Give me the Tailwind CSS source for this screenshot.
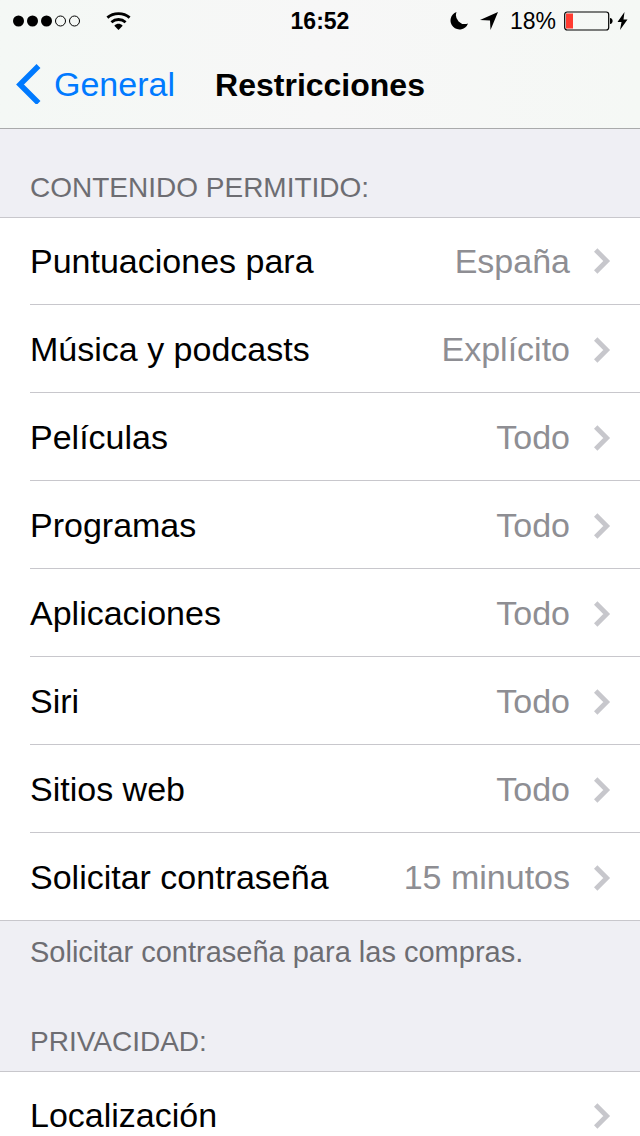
<!DOCTYPE html>
<html lang="es">
<head>
<meta charset="utf-8">
<meta name="viewport" content="width=device-width, initial-scale=1">
<title>Restricciones</title>
<script src="https://cdn.jsdelivr.net/npm/@tailwindcss/browser@4"></script>
</head>
<body class="flex h-screen flex-col overflow-hidden bg-[#efeff4] font-['Liberation_Sans',Arial,sans-serif] text-black">
<svg class="hidden" aria-hidden="true">
  <symbol id="chevron" viewBox="0 0 17 26"><path d="M1.700 2 12.700 13 1.700 24" fill="none" stroke="#c7c7cc" stroke-width="4.800"/></symbol>
</svg>

<header class="shrink-0 border-b border-[#a9aaab] bg-linear-to-r from-[#f4f8f5] via-[#f7f7f7] to-[#f5f8f5]">
  <div class="grid h-10 grid-cols-[1fr_auto_1fr] items-center px-3 pt-px text-[23px] leading-10">
    <div class="flex items-center gap-6">
      <svg class="h-3 w-[70px]" viewBox="0 0 70 12" role="img" aria-label="Cobertura">
        <circle cx="6.5" cy="6" r="5.500"/><circle cx="20.5" cy="6" r="5.500"/><circle cx="34.5" cy="6" r="5.500"/>
        <circle cx="48.5" cy="6" r="5" fill="none" stroke="#000"/><circle cx="62.5" cy="6" r="5" fill="none" stroke="#000"/>
      </svg>
      <svg class="h-[18px] w-[25px]" viewBox="0 0 25 18" role="img" aria-label="Wi-Fi">
        <g fill="none" stroke="#000" stroke-width="2.800"><path d="M1.400 5.600C7.500 .3 17.500 .3 23.600 5.600"/><path d="M5.400 10.200C9.500 6.600 15.500 6.600 19.600 10.200"/></g>
        <path d="M8.300 13.800C11 11.200 14 11.200 16.700 13.800L12.500 18Z"/>
      </svg>
    </div>
    <time class="font-bold">16:52</time>
    <div class="flex items-center justify-end">
      <svg class="mr-3 h-[18px] w-[18px]" viewBox="0 0 18 18" role="img" aria-label="No molestar"><path d="M6.500 0A9 9 0 1 0 18 11.500 9 9 0 0 1 6.500 0Z"/></svg>
      <svg class="mr-3 h-[18px] w-[18px]" viewBox="0 0 18 18" role="img" aria-label="Localización"><path d="M18 0 10.500 18 10 8.500 0 8Z"/></svg>
      <span>18%</span>
      <svg class="ml-2 h-5 w-[49px]" viewBox="0 0 49 20" role="img" aria-label="Batería">
        <rect x=".7" y="1" width="44" height="18" rx="2.500" fill="none" stroke="#000" stroke-width="1.200"/>
        <rect x="2" y="2.500" width="7" height="15" fill="#ff3b30"/>
        <path d="M46 7C49.500 7 49.500 13 46 13Z"/>
      </svg>
      <svg class="ml-1 h-[18px] w-[11px]" viewBox="0 0 11 18" role="img" aria-label="Cargando"><path d="M7.500 0 .5 10H4.500L3 18 10.500 7.500H6.500Z"/></svg>
    </div>
  </div>
  <nav class="grid h-22 grid-cols-[1fr_auto_1fr] items-center px-4 text-[34px]">
    <a href="#general" class="flex items-center gap-3 text-[#007aff]">
      <svg class="h-10 w-[26px]" viewBox="0 0 26 40" aria-hidden="true"><path d="M22.500 2 4 20.500 22.500 39" fill="none" stroke="#007aff" stroke-width="5.500"/></svg>
      General
    </a>
    <h1 class="pt-px text-[32px] font-bold">Restricciones</h1>
  </nav>
</header>

<main class="flex-1 overflow-y-auto [scrollbar-width:none]">
  <section>
    <h2 class="flex h-22 items-end px-[30px] pb-[13px] text-[28px] leading-8 text-[#6d6d72]">CONTENIDO PERMITIDO:</h2>
    <ul class="border-y border-[#c8c7cc] bg-white text-[34px]">
      <li class="pl-[30px]"><a href="#puntuaciones" class="flex h-[87px] items-center border-b border-[#c8c7cc] pr-[29px]"><span class="flex-1">Puntuaciones para</span><span class="text-[#8e8e93]">España</span><svg class="ml-6 h-[26px] w-[17px]" aria-hidden="true"><use href="#chevron"/></svg></a></li>
      <li class="pl-[30px]"><a href="#musica" class="flex h-22 items-center border-b border-[#c8c7cc] pt-0.5 pr-[29px]"><span class="flex-1">Música y podcasts</span><span class="text-[#8e8e93]">Explícito</span><svg class="ml-6 h-[26px] w-[17px]" aria-hidden="true"><use href="#chevron"/></svg></a></li>
      <li class="pl-[30px]"><a href="#peliculas" class="flex h-22 items-center border-b border-[#c8c7cc] pt-0.5 pr-[29px]"><span class="flex-1">Películas</span><span class="text-[#8e8e93]">Todo</span><svg class="ml-6 h-[26px] w-[17px]" aria-hidden="true"><use href="#chevron"/></svg></a></li>
      <li class="pl-[30px]"><a href="#programas" class="flex h-22 items-center border-b border-[#c8c7cc] pt-0.5 pr-[29px]"><span class="flex-1">Programas</span><span class="text-[#8e8e93]">Todo</span><svg class="ml-6 h-[26px] w-[17px]" aria-hidden="true"><use href="#chevron"/></svg></a></li>
      <li class="pl-[30px]"><a href="#aplicaciones" class="flex h-22 items-center border-b border-[#c8c7cc] pt-0.5 pr-[29px]"><span class="flex-1">Aplicaciones</span><span class="text-[#8e8e93]">Todo</span><svg class="ml-6 h-[26px] w-[17px]" aria-hidden="true"><use href="#chevron"/></svg></a></li>
      <li class="pl-[30px]"><a href="#siri" class="flex h-22 items-center border-b border-[#c8c7cc] pt-0.5 pr-[29px]"><span class="flex-1">Siri</span><span class="text-[#8e8e93]">Todo</span><svg class="ml-6 h-[26px] w-[17px]" aria-hidden="true"><use href="#chevron"/></svg></a></li>
      <li class="pl-[30px]"><a href="#web" class="flex h-22 items-center border-b border-[#c8c7cc] pt-0.5 pr-[29px]"><span class="flex-1">Sitios web</span><span class="text-[#8e8e93]">Todo</span><svg class="ml-6 h-[26px] w-[17px]" aria-hidden="true"><use href="#chevron"/></svg></a></li>
      <li class="pl-[30px]"><a href="#contrasena" class="flex h-[87px] items-center pt-0.5 pr-[29px]"><span class="flex-1">Solicitar contraseña</span><span class="text-[#8e8e93]">15 minutos</span><svg class="ml-6 h-[26px] w-[17px]" aria-hidden="true"><use href="#chevron"/></svg></a></li>
    </ul>
    <p class="px-[30px] pt-[15px] text-[29px] leading-8 text-[#6d6d72]">Solicitar contraseña para las compras.</p>
  </section>
  <section>
    <h2 class="px-[30px] pt-[58px] pb-[13px] text-[28px] leading-8 text-[#6d6d72]">PRIVACIDAD:</h2>
    <ul class="border-y border-[#c8c7cc] bg-white text-[34px]">
      <li class="pl-[30px]"><a href="#localizacion" class="flex h-[87px] items-center pr-[29px]"><span class="flex-1">Localización</span><svg class="ml-6 h-[26px] w-[17px]" aria-hidden="true"><use href="#chevron"/></svg></a></li>
    </ul>
  </section>
</main>
</body>
</html>
